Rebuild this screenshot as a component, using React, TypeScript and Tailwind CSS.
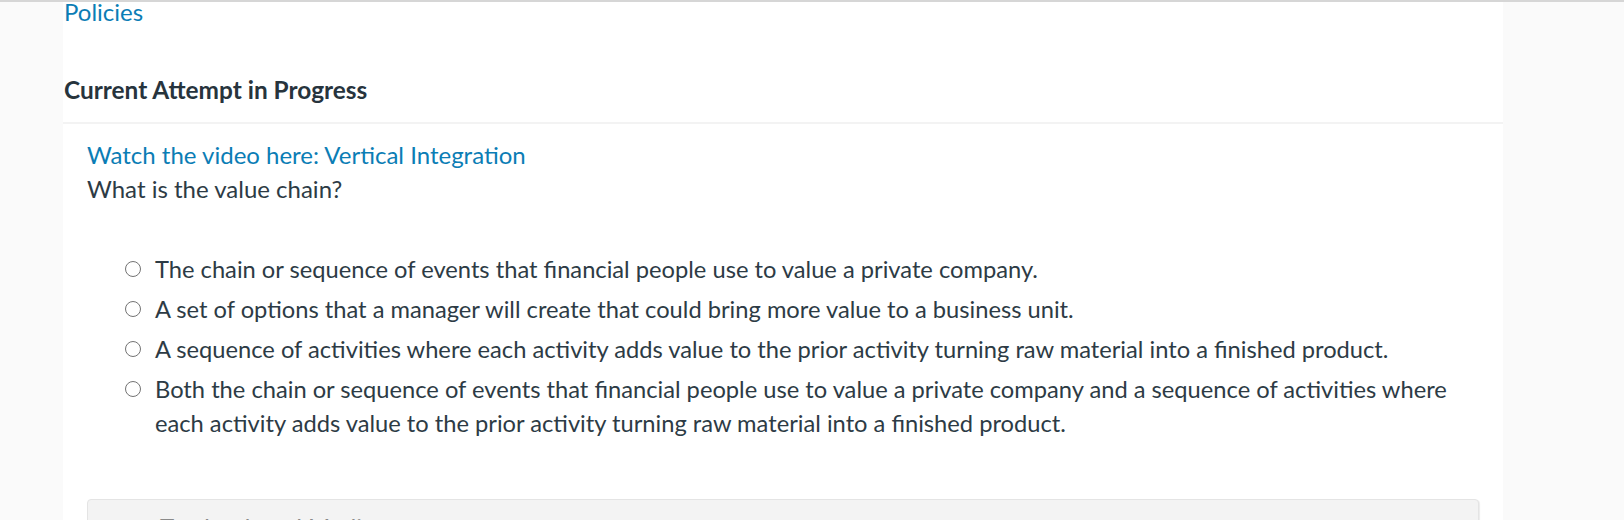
import React from 'react';

const options = [
  'The chain or sequence of events that financial people use to value a private company.',
  'A set of options that a manager will create that could bring more value to a business unit.',
  'A sequence of activities where each activity adds value to the prior activity turning raw material into a finished product.',
  'Both the chain or sequence of events that financial people use to value a private company and a sequence of activities where each activity adds value to the prior activity turning raw material into a finished product.',
];

function Radio() {
  return (
    <span className="mt-[9px] h-[16px] w-[16px] shrink-0 rounded-full border-[1.5px] border-[#737373] bg-white" />
  );
}

export default function App() {
  return (
    <div className="h-[520px] w-full overflow-hidden border-t-2 border-[#d6d6d6] bg-[#fafafa] font-['Lato','Liberation_Sans',sans-serif] text-[#2d3b45]">
      <div className="flex">
        {/* left gutter */}
        <div className="w-[63px] shrink-0" />

        <main className="w-[1440px] shrink-0 bg-white">
          <a className="block pl-px text-[24px] leading-[20px] text-[#0b7db5]">Policies</a>

          <h2 className="mt-[53px] mb-[17px] pl-px text-[24.4px] font-bold leading-[30px] text-[#27343d]">
            Current Attempt in Progress
          </h2>

          <div className="h-[2px] bg-[#f3f3f3]" />

          <div className="px-6 pt-[14px]">
            <a className="block text-[24px] leading-[34px] text-[#0b7db5]">
              Watch the video here: Vertical Integration
            </a>
            <p className="text-[24px] leading-[34px]">What is the value chain?</p>

            <ul className="mt-[43px] pl-[38px]">
              {options.map((text) => (
                <li key={text} className="flex gap-[14px] py-[3px]">
                  <Radio />
                  <span className="text-[23.7px] leading-[34px]">{text}</span>
                </li>
              ))}
            </ul>

            {/* collapsed media panel, cut off by the viewport */}
            <div className="mt-[56px] rounded-sm border border-[#e4e4e4] bg-[#f3f3f3] pl-[36px] pt-[15px] shadow-[1px_1px_1px_rgba(0,0,0,0.08)]">
              <div className="flex items-center gap-3 text-[24px] leading-[24px] text-[#8a8a8a]">
                <span className="h-[14px] w-[14px] bg-[#c8c8c8]" />
                <span>eTextbook and Media</span>
              </div>
              <div className="h-[40px]" />
            </div>
          </div>
        </main>

        {/* right gutter */}
        <div className="flex-1" />
      </div>
    </div>
  );
}
